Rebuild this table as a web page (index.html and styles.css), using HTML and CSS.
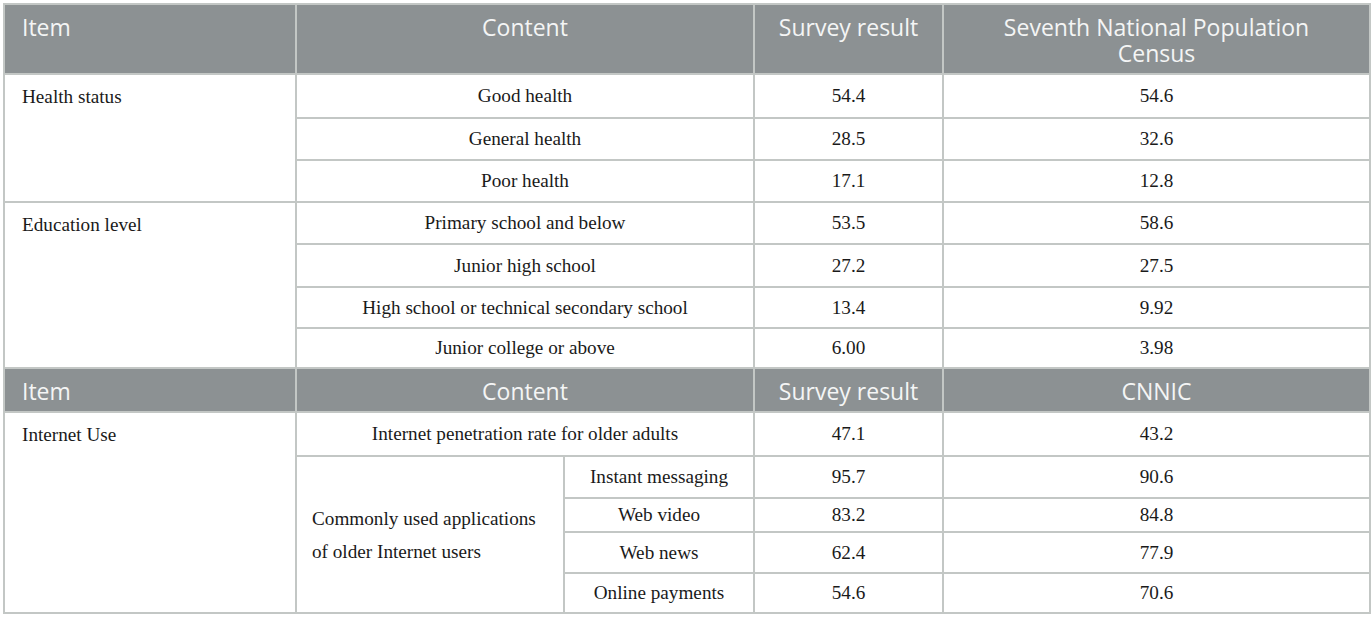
FILE: index.html
```html
<!DOCTYPE html>
<html lang="en">
<head>
<meta charset="utf-8">
<title>Survey comparison</title>
<link rel="stylesheet" href="styles.css">
</head>
<body>
<table class="data">
  <colgroup>
    <col class="c-item">
    <col class="c-b1">
    <col class="c-b2">
    <col class="c-survey">
    <col class="c-ref">
  </colgroup>
  <tbody>
    <tr class="head h1">
      <th class="left">Item</th>
      <th colspan="2">Content</th>
      <th>Survey result</th>
      <th>Seventh National Population<br>Census</th>
    </tr>
    <tr class="r44">
      <td class="left top" rowspan="3">Health status</td>
      <td colspan="2">Good health</td>
      <td>54.4</td>
      <td>54.6</td>
    </tr>
    <tr class="r42">
      <td colspan="2">General health</td>
      <td>28.5</td>
      <td>32.6</td>
    </tr>
    <tr class="r42">
      <td colspan="2">Poor health</td>
      <td>17.1</td>
      <td>12.8</td>
    </tr>
    <tr class="r42">
      <td class="left top" rowspan="4">Education level</td>
      <td colspan="2">Primary school and below</td>
      <td>53.5</td>
      <td>58.6</td>
    </tr>
    <tr class="r43">
      <td colspan="2">Junior high school</td>
      <td>27.2</td>
      <td>27.5</td>
    </tr>
    <tr class="r41">
      <td colspan="2">High school or technical secondary school</td>
      <td>13.4</td>
      <td>9.92</td>
    </tr>
    <tr class="r40">
      <td colspan="2">Junior college or above</td>
      <td>6.00</td>
      <td>3.98</td>
    </tr>
    <tr class="head h2">
      <th class="left">Item</th>
      <th colspan="2">Content</th>
      <th>Survey result</th>
      <th>CNNIC</th>
    </tr>
    <tr class="r44">
      <td class="left top" rowspan="5">Internet Use</td>
      <td colspan="2">Internet penetration rate for older adults</td>
      <td>47.1</td>
      <td>43.2</td>
    </tr>
    <tr class="r42">
      <td class="apps" rowspan="4">Commonly used applications<br>of older Internet users</td>
      <td>Instant messaging</td>
      <td>95.7</td>
      <td>90.6</td>
    </tr>
    <tr class="r34">
      <td>Web video</td>
      <td>83.2</td>
      <td>84.8</td>
    </tr>
    <tr class="r41">
      <td>Web news</td>
      <td>62.4</td>
      <td>77.9</td>
    </tr>
    <tr class="r40">
      <td>Online payments</td>
      <td>54.6</td>
      <td>70.6</td>
    </tr>
  </tbody>
</table>
</body>
</html>
```
FILE: styles.css
```css
html, body {
  margin: 0;
  padding: 0;
  background: #ffffff;
}

body {
  padding: 3px;
}

.data {
  width: 1366px;
  border-collapse: collapse;
  table-layout: fixed;
  border: 2px solid #c3c7c5;
  font-family: "Liberation Serif", "Times New Roman", serif;
  font-size: 19.2px;
  color: #1a1a1a;
}

.c-item { width: 292px; }
.c-b1 { width: 268px; }
.c-b2 { width: 190px; }
.c-survey { width: 189px; }
.c-ref { width: 427px; }

.data th,
.data td {
  border: 2px solid #c3c7c5;
  padding: 0;
  text-align: center;
  vertical-align: middle;
}

.head th {
  background: #8c9193;
  color: #f4f5f5;
  font-family: "Open Sans", "Liberation Sans", sans-serif;
  font-weight: 400;
  font-size: 23px;
  line-height: 26px;
  vertical-align: top;
  padding: 9px 6px 7px;
}

.head th.left {
  text-align: left;
  padding-left: 17px;
}

.h1 { height: 69px; }
.h2 { height: 43px; }

.r44 { height: 44px; }
.r43 { height: 43px; }
.r42 { height: 42px; }
.r41 { height: 41px; }
.r40 { height: 40px; }
.r34 { height: 34px; }

.data td.left {
  text-align: left;
  padding-left: 17px;
}

.data td.top {
  vertical-align: top;
  padding-top: 11px;
  line-height: 22px;
}

.data td.apps {
  text-align: left;
  padding-left: 15px;
  line-height: 33px;
}
```
